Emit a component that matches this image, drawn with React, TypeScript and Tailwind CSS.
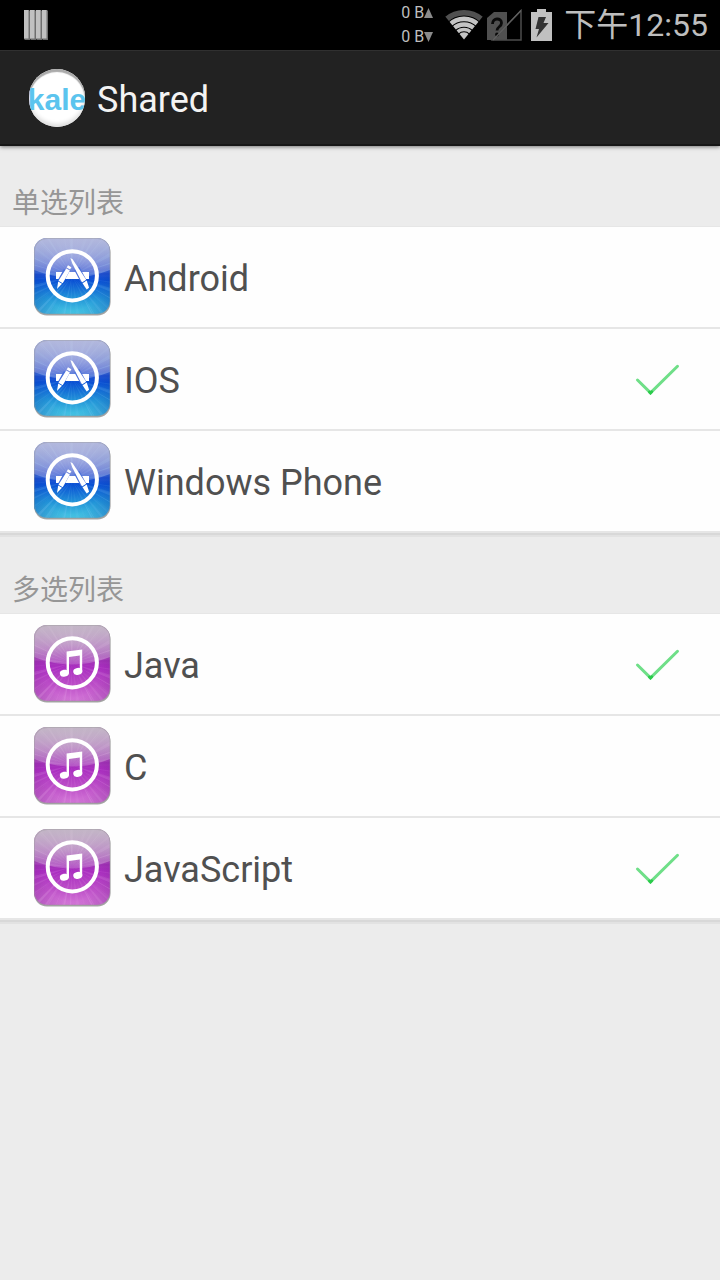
import { useState } from "react";

type Item = { id: string; label: string };

const platforms: Item[] = [
    { id: "android", label: "Android" },
    { id: "ios", label: "IOS" },
    { id: "wp", label: "Windows Phone" },
];

const languages: Item[] = [
    { id: "java", label: "Java" },
    { id: "c", label: "C" },
    { id: "js", label: "JavaScript" },
];

// thin wedges spreading out from the middle of a tile
const rays = Array.from({ length: 52 }, (_, i) => {
    const a = (i / 52) * Math.PI * 2 + (i % 3) * 0.04;
    const w = 0.01 + (i % 4) * 0.006;
    const pt = (t: number) => `${(40 + Math.cos(t) * 60).toFixed(1)},${(39 + Math.sin(t) * 60).toFixed(1)}`;
    return { points: `40,39 ${pt(a - w)} ${pt(a + w)}`, opacity: 0.06 + (i % 5) * 0.035 };
});

function Tile({ kind }: { kind: "store" | "music" }) {
    const store = kind === "store";
    const id = `tile-${kind}`;

    return (
        <svg viewBox="0 0 80 80" className="size-20 shrink-0" aria-hidden="true">
            <defs>
                <linearGradient id={id} x1="0" y1="0" x2="0" y2="1">
                    <stop offset="0" stopColor={store ? "#7680cc" : "#a283a8"} />
                    <stop offset="0.4" stopColor={store ? "#3450cc" : "#9a35ae"} />
                    <stop offset="0.56" stopColor={store ? "#0a50d4" : "#aa2ec0"} />
                    <stop offset="0.8" stopColor={store ? "#2396d8" : "#bd50c8"} />
                    <stop offset="1" stopColor={store ? "#48c8e4" : "#d478d8"} />
                </linearGradient>
                <linearGradient id={`${id}-gloss`} x1="0" y1="0" x2="0" y2="1">
                    <stop offset="0" stopColor={store ? "#c4c6e2" : "#cac4cc"} stopOpacity="0.85" />
                    <stop offset="1" stopColor="#fff" stopOpacity="0.18" />
                </linearGradient>
                <radialGradient id={`${id}-edge`} cx="0.5" cy="0.6" r="0.6">
                    <stop offset="0.6" stopColor={store ? "#0a3aa8" : "#7a1f92"} stopOpacity="0" />
                    <stop offset="1" stopColor={store ? "#0a3aa8" : "#7a1f92"} stopOpacity="0.35" />
                </radialGradient>
                <clipPath id={`${id}-clip`}>
                    <rect x="2" y="1" width="76" height="76" rx="13" />
                </clipPath>
            </defs>
            <rect x="2" y="2.5" width="76.5" height="76" rx="13" fill="#a4a4a4" />
            <g clipPath={`url(#${id}-clip)`}>
                <rect x="2" y="1" width="76" height="76" fill={`url(#${id})`} />
                <rect x="2" y="1" width="76" height="76" fill={`url(#${id}-edge)`} />
                {rays.map((r, i) => (
                    <polygon key={i} points={r.points} fill={store ? "#8fd4ff" : "#f0b8f2"} opacity={r.opacity} />
                ))}
                <path d="M2 1h76v32q-38 15-76 0z" fill={`url(#${id}-gloss)`} />
            </g>
            <rect x="2.5" y="1.5" width="75.5" height="75.5" rx="12.5" fill="none" stroke="#999" strokeOpacity="0.4" />
            <circle cx="40.3" cy="38.8" r="24.6" fill="none" stroke="#fff" strokeWidth="4" />
            {store ? (
                <g>
                    <path d="M24 35h33v7H24z" fill="#fff" />
                    <path d="M44.8 31.5l6.5 12M34.5 33.5L29 43.5" stroke="#4a70da" strokeWidth="6" />
                    <path d="M38.4 21l2.2 1.2 13.6 20.6-4.2 2.6-9.6-18.6z" fill="#fff" />
                    <path d="M50.5 46.2l4.2-2.6 2.4 7.2-2.4 1.8z" fill="#fff" />
                    <path d="M36 28.3l3.4 2-1.3 2.3-3.4-2z" fill="#fff" />
                    <path d="M34.3 31.4l3.6 2.1-7.2 12.8-4.2-2.5zM26.2 44.5l3.8 2.2-5 5.3z" fill="#fff" />
                </g>
            ) : (
                <g fill="#fff">
                    <path d="M34.6 27.6l15.6-2.2v22h-2.4V31.4l-10.8 1.5v16.3h-2.4z" />
                    <ellipse cx="32.4" cy="49.2" rx="4.6" ry="3.4" transform="rotate(-12 32.4 49.2)" />
                    <ellipse cx="45.8" cy="47.4" rx="4.6" ry="3.4" transform="rotate(-12 45.8 47.4)" />
                </g>
            )}
        </svg>
    );
}

function CheckMark() {
    return (
        <svg viewBox="0 0 48 40" className="pointer-events-none col-start-1 row-start-1 h-10 w-12" fill="none" strokeLinecap="round" aria-hidden="true">
            <path d="M5.5 21L18.5 33.8L45.5 7.3" stroke="#6fdf88" strokeWidth="3" />
            <path d="M17.5 33l1 1 1.2-1.2" stroke="#2bcb4b" strokeWidth="3" />
        </svg>
    );
}

type SectionProps = {
    title: string;
    name: string;
    type: "radio" | "checkbox";
    kind: "store" | "music";
    items: Item[];
    selected: string[];
    onToggle: (id: string) => void;
};

function Section({ title, name, type, kind, items, selected, onToggle }: SectionProps) {
    return (
        <section aria-label={title}>
            <h2 className="px-3 pt-[38px] pb-0.5 text-[28px] leading-10 text-[#969696]">{title}</h2>
            <ul className="border-t border-[#e6e6e6] bg-[#fefefe] shadow-[0_2px_0_#d8d8d8,0_4px_0_#e2e2e2]">
                {items.map(item => (
                    <li key={item.id} className="border-b-2 border-[#e6e6e6]">
                        <label className="flex h-[100px] items-center gap-3 pr-10 pl-8">
                            <Tile kind={kind} />
                            <span className="flex-1 pt-1 text-4xl text-[#505050]">{item.label}</span>
                            <span className="grid">
                                <input
                                    type={type}
                                    name={name}
                                    checked={selected.includes(item.id)}
                                    onChange={() => onToggle(item.id)}
                                    className="col-start-1 row-start-1 h-10 w-12 appearance-none"
                                />
                                {selected.includes(item.id) && <CheckMark />}
                            </span>
                        </label>
                    </li>
                ))}
            </ul>
        </section>
    );
}

function StatusBar() {
    return (
        <div className="flex h-[50px] items-center bg-black pr-3 pl-6 text-[#bebebe]">
            <svg viewBox="0 0 24 30" className="h-[30px] w-6" aria-hidden="true">
                {[0, 6, 12, 18].map(x => (
                    <g key={x}>
                        <path d={`M${x} 0h5l1 1v29h-5l-1-1z`} fill="#6e6e6e" />
                        <path d={`M${x} 0h4.5v28.5h-4.5z`} fill="#c0c0c0" />
                    </g>
                ))}
            </svg>
            <div className="ml-auto text-base leading-6">
                <div className="flex items-center">
                    0 B
                    <svg viewBox="0 0 9 10" className="h-2.5 w-[9px]" aria-hidden="true"><path d="M4.5 0L9 10H0z" fill="#8a8a8a" /></svg>
                </div>
                <div className="flex items-center">
                    0 B
                    <svg viewBox="0 0 9 10" className="h-2.5 w-[9px]" aria-hidden="true"><path d="M4.5 10L9 0H0z" fill="#8a8a8a" /></svg>
                </div>
            </div>
            {/* wifi */}
            <svg viewBox="0 0 38 30" className="ml-3 h-[30px] w-[38px]" aria-hidden="true">
                <clipPath id="wifi-fan">
                    <path d="M19 29.5L-1 5V0h40v5z" />
                </clipPath>
                <g clipPath="url(#wifi-fan)" fill="none" stroke="#c4c4c4">
                    <circle cx="19" cy="29.5" r="26.7" stroke="#505050" strokeWidth="5.4" />
                    <circle cx="19" cy="29.5" r="20.6" strokeWidth="4.6" />
                    <circle cx="19" cy="29.5" r="15" strokeWidth="4.4" />
                    <circle cx="19" cy="29.5" r="10" strokeWidth="3.6" />
                    <circle cx="19" cy="29.5" r="3.6" strokeWidth="7.2" />
                </g>
            </svg>
            {/* sim card missing */}
            <svg viewBox="0 0 36 32" className="ml-1 h-8 w-9" aria-hidden="true">
                <path d="M0 9L7 3h13v28H0z" fill="#505050" />
                <path d="M34 1.5V31H5.5z" fill="none" stroke="#4c4c4c" strokeWidth="1.5" />
                <path d="M5.5 15c0-6.5 9-6.5 9-1 0 4-4.5 3.5-4.5 7.5" fill="none" stroke="#0a0a0a" strokeWidth="2.8" />
                <circle cx="10" cy="25.5" r="1.9" fill="#0a0a0a" />
                <path d="M6 31L34 1.5" stroke="#606060" strokeWidth="1.2" />
            </svg>
            {/* battery */}
            <svg viewBox="0 0 21 32" className="ml-2 h-8 w-[21px]" aria-hidden="true">
                <path d="M6 0h9v3h6v29H0V3h6z" fill="#c0c0c0" />
                <path d="M7.5 8H15l-2.5 6h5l-12 14.5L8 20H4.5z" fill="#333" />
            </svg>
            <time className="ml-3 text-[32px] leading-none whitespace-nowrap">下午12:55</time>
        </div>
    );
}

export default function App() {
    const [platform, setPlatform] = useState("ios");
    const [langs, setLangs] = useState<string[]>(["java", "js"]);

    const toggleLang = (id: string) => {
        setLangs(prev => (prev.includes(id) ? prev.filter(l => l !== id) : [...prev, id]));
    };

    return (
        <div className="min-h-screen bg-[#ececec] font-[Roboto,'Noto_Sans_CJK_SC',sans-serif]" lang="zh-CN">
            <StatusBar />
            <header className="flex h-24 items-center gap-3 border-t border-b-2 border-t-[#303030] border-b-[#161616] bg-[#222] pl-[29px] shadow-[0_1px_4px_rgba(0,0,0,0.5)]">
                <div className="flex h-[58px] w-14 items-center justify-center overflow-hidden rounded-full bg-white pt-1 font-['Liberation_Sans',Arial,sans-serif] text-[30px] leading-none font-bold text-[#5bc4ee] shadow-[inset_0_3px_1px_#aaa,inset_0_-3px_4px_#ddd]">
                    kale
                </div>
                <h1 className="pt-1 text-4xl text-[#f3f3f3]">Shared</h1>
            </header>
            <main>
                <Section
                    title="单选列表"
                    name="platform"
                    type="radio"
                    kind="store"
                    items={platforms}
                    selected={[platform]}
                    onToggle={setPlatform}
                />
                <Section
                    title="多选列表"
                    name="language"
                    type="checkbox"
                    kind="music"
                    items={languages}
                    selected={langs}
                    onToggle={toggleLang}
                />
            </main>
        </div>
    );
}
